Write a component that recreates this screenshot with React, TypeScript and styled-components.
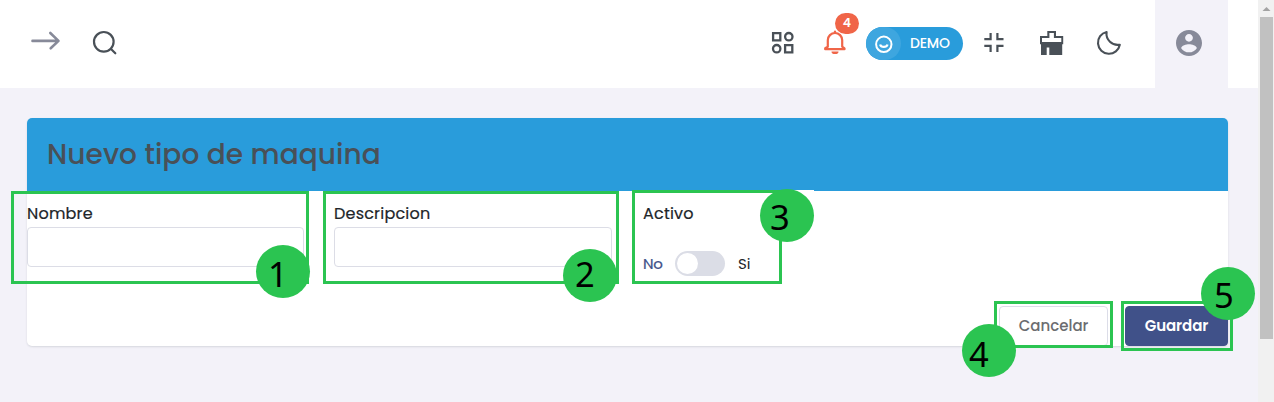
import React from "react";
import styled, { createGlobalStyle } from "styled-components";

const GlobalStyle = createGlobalStyle`
  * { box-sizing: border-box; }
  body { margin: 0; overflow: hidden; background: #f3f2f9; font-family: Poppins, Inter, "Liberation Sans", sans-serif; }
`;

const Screen = styled.div`
  position: relative;
  display: flex;
  width: 1274px;
  height: 402px;
  overflow: hidden;
`;

const Page = styled.div`
  flex: 1;
  display: flex;
  flex-direction: column;
  background: #f3f2f9;
`;

const Header = styled.header`
  height: 88px;
  display: flex;
  align-items: flex-start;
  padding-right: 30px;
  background: #fff;
`;

const Icon = styled.svg<{ $left: number; $top: number; $color?: string }>`
  flex: none;
  display: block;
  overflow: visible;
  margin-left: ${(p) => p.$left}px;
  margin-top: ${(p) => p.$top}px;
  color: ${(p) => p.$color ?? "#495057"};
`;

const Tools = styled.div`
  display: flex;
  align-items: flex-start;
  margin-left: auto;
`;

const Bell = styled.div`
  position: relative;
  width: 24px;
  margin-left: 29px;
`;

const Badge = styled.span`
  position: absolute;
  left: 12px;
  top: 13px;
  width: 24px;
  height: 21px;
  border-radius: 11px;
  background: #f06548;
  color: #fff;
  font-size: 12.5px;
  font-weight: 600;
  line-height: 20px;
  text-align: center;
`;

const DemoPill = styled.div`
  display: flex;
  align-items: center;
  width: 97px;
  height: 33px;
  margin: 27px 0 0 19px;
  border-radius: 17px;
  overflow: hidden;
  background: #299cdb;
  color: #fff;
  font-size: 14px;
  font-weight: 500;
  line-height: 33px;
  letter-spacing: -0.2px;
`;

const Face = styled.span`
  display: flex;
  align-items: center;
  justify-content: center;
  width: 35px;
  height: 33px;
  margin-right: 9px;
  border-radius: 0 17px 17px 0;
  background: #3ea6df;
`;

const UserBox = styled.div`
  width: 73px;
  height: 88px;
  margin-left: 33px;
  background: #f3f2f9;
`;

const Card = styled.main`
  display: flex;
  flex-direction: column;
  width: 1201px;
  height: 228px;
  margin: 30px 0 0 27px;
  border-radius: 5px;
  background: #fff;
  box-shadow: 0 1px 2px rgba(56, 65, 74, 0.15);
`;

const CardTitle = styled.h1`
  height: 73px;
  margin: 0;
  padding-left: 20px;
  border-radius: 5px 5px 0 0;
  background: #299cdb;
  color: #495057;
  font-size: 28px;
  font-weight: 500;
  line-height: 73px;
  letter-spacing: 0.08px;
`;

const Fields = styled.div`
  display: flex;
  gap: 30px;
  padding-top: 12px;
`;

const Field = styled.div<{ $width: number; $indent?: number }>`
  width: ${(p) => p.$width}px;
  padding-left: ${(p) => p.$indent ?? 0}px;
`;

const Label = styled.label`
  display: block;
  height: 24px;
  color: #212529;
  font-size: 16px;
  font-weight: 400;
  line-height: 21px;
  letter-spacing: 0.2px;
  -webkit-text-stroke: 0.2px #212529;
`;

const Input = styled.input`
  display: block;
  width: 100%;
  height: 40px;
  border: 1px solid #dcdde6;
  border-radius: 4px;
  background: #fff;
  outline: none;
`;

const SwitchRow = styled.div`
  display: flex;
  align-items: center;
  height: 25px;
  margin-top: 24px;
  color: #212529;
  font-size: 15px;
`;

const OffText = styled.span`
  width: 32px;
  color: #405189;
  letter-spacing: -0.3px;
  -webkit-text-stroke: 0.2px #405189;
`;

const Track = styled.span`
  width: 50px;
  height: 25px;
  margin-right: 13px;
  padding: 2px;
  border-radius: 13px;
  background: #dbdde6;
`;

const Knob = styled.span`
  display: block;
  width: 21px;
  height: 21px;
  border-radius: 50%;
  background: #fff;
`;

const Actions = styled.div`
  display: flex;
  justify-content: flex-end;
  gap: 17px;
  margin-top: auto;
`;

const Button = styled.button<{ $primary?: boolean }>`
  width: ${(p) => (p.$primary ? 103 : 109)}px;
  height: 40px;
  padding: 0 0 2px;
  border: 1px solid ${(p) => (p.$primary ? "#405189" : "#dcdde8")};
  border-radius: 4px;
  background: ${(p) => (p.$primary ? "#405189" : "#fff")};
  color: ${(p) => (p.$primary ? "#fff" : "#6b6c70")};
  font-family: inherit;
  font-size: 15px;
  font-weight: ${(p) => (p.$primary ? 600 : 500)};
  letter-spacing: ${(p) => (p.$primary ? -0.1 : 0)}px;
`;

const Scrollbar = styled.div`
  width: 16px;
  padding: 0 1px 0 2px;
  background: #f1f1f1;
`;

const ScrollArrow = styled.svg`
  display: block;
  width: 13px;
  height: 17px;
`;

const Thumb = styled.div`
  height: 322px;
  background: #c1c1c1;
`;

const Outline = styled.div<{ $x: number; $y: number; $w: number; $h: number }>`
  position: absolute;
  left: ${(p) => p.$x}px;
  top: ${(p) => p.$y}px;
  width: ${(p) => p.$w}px;
  height: ${(p) => p.$h}px;
  border: 3px solid #2bc451;
`;

const Marker = styled.div<{ $x: number; $y: number; $pad: number; $drop: number }>`
  position: absolute;
  left: ${(p) => p.$x}px;
  top: ${(p) => p.$y}px;
  width: 54px;
  height: 53px;
  padding: ${(p) => p.$drop}px 0 0 ${(p) => p.$pad}px;
  border-radius: 50%;
  background: #2bc451;
  color: #000;
  font-family: "Noto Sans", "Open Sans", sans-serif;
  font-size: 34.5px;
  line-height: 40px;
`;

const MarkerEdge = styled.div`
  position: absolute;
  left: 780px;
  top: 190px;
  width: 34px;
  height: 2px;
  background: #fff;
`;

const steps = [
  { box: [11, 191, 298, 93], dot: [256, 245], pad: 12, drop: 9 },
  { box: [323, 191, 296, 93], dot: [563, 249], pad: 12, drop: 5 },
  { box: [632, 190, 150, 94], dot: [760, 189], pad: 10, drop: 8 },
  { box: [994, 301, 119, 47], dot: [962, 324], pad: 7, drop: 10 },
  { box: [1121, 301, 112, 50], dot: [1201, 267], pad: 13, drop: 8 },
];

export default function App() {
  return (
    <>
      <GlobalStyle />
      <Screen>
        <Page>
          <Header>
            <Icon $left={31} $top={31} $color="#878a99" width="30" height="20" fill="none" stroke="currentColor" strokeWidth="2.6" strokeLinecap="round" strokeLinejoin="round">
              <path d="M1.5 9.9H27M19.3 2l8.2 7.9-7.8 7.4" />
            </Icon>
            <Icon $left={32} $top={31} width="25" height="25" fill="none" stroke="currentColor" strokeWidth="2.2" strokeLinecap="round">
              <circle cx="10.8" cy="10.8" r="9.8" />
              <path d="M18 18l4.3 4.3" />
            </Icon>
            <Tools>
              <Icon $left={0} $top={32} width="22" height="22" fill="none" stroke="currentColor" strokeWidth="2.3">
                <path d="M1.1 1.100h7.200v7.200H1.100zM13.100 13.100h7.200v7.200h-7.200z" />
                <circle cx="16.800" cy="4.700" r="3.700" />
                <circle cx="4.700" cy="16.700" r="3.700" />
              </Icon>
              <Bell>
                <Icon $left={0} $top={30} $color="#f06548" width="24" height="25" fill="none" stroke="currentColor" strokeWidth="2.2" strokeLinejoin="round">
                  <path d="M4.800 16.700V10.200a7.200 7.200 0 0 1 14.400 0v6.500l2.300 1.600v.9H2.200v-.9z" />
                  <path d="M12 1.500v1.400" strokeLinecap="round" />
                  <path d="M8.500 21.400h7a3.500 2.600 0 0 1-7 0z" fill="currentColor" stroke="none" />
                </Icon>
                <Badge>4</Badge>
              </Bell>
              <DemoPill>
                <Face>
                  <svg width="18" height="18" fill="none" stroke="currentColor" strokeWidth="2">
                    <circle cx="8.800" cy="9.300" r="7.700" />
                    <path d="M5.100 9.500a3.800 3.200 0 0 0 7.400 0" strokeWidth="2.200" />
                  </svg>
                </Face>
                DEMO
              </DemoPill>
              <Icon $left={21} $top={33} width="20" height="20" fill="none" stroke="currentColor" strokeWidth="2.200">
                <path d="M6.600 0v6.100H.3M13.400 0v6.100h6.100M6.600 19v-6.100H.3M13.400 19v-6.100h6.100" />
              </Icon>
              <Icon $left={36} $top={31} width="24" height="24" fill="currentColor">
                <path fillRule="evenodd" d="M7.300 0h8.700v5h7.200v8.200h-1V24H9.300V16.500H6.700V24H1V13.200H0V5h7.300zM9.400 2v5H2v4h19.300V7h-7.400V2z" />
              </Icon>
              <Icon $left={33} $top={31} width="25" height="24" fill="none" stroke="currentColor" strokeWidth="2.100" strokeLinejoin="round">
                <path d="M9.600 1A11.300 11.300 0 0 0 22.800 13.700 11 11 0 1 1 9.600 1z" />
              </Icon>
              <UserBox>
                <Icon $left={21} $top={30} $color="#878a99" width="26" height="26" viewBox="2 2 20 20" fill="currentColor">
                  <path d="M12 2C6.480 2 2 6.480 2 12s4.480 10 10 10 10-4.480 10-10S17.520 2 12 2zm0 3c1.660 0 3 1.340 3 3s-1.340 3-3 3-3-1.340-3-3 1.340-3 3-3zm0 14.200c-2.500 0-4.710-1.280-6-3.220.030-1.990 4-3.080 6-3.080 1.990 0 5.970 1.090 6 3.080-1.290 1.940-3.500 3.220-6 3.220z" />
                </Icon>
              </UserBox>
            </Tools>
          </Header>
          <Card>
            <CardTitle>Nuevo tipo de maquina</CardTitle>
            <Fields>
              <Field $width={277}>
                <Label>Nombre</Label>
                <Input aria-label="Nombre" />
              </Field>
              <Field $width={278}>
                <Label>Descripcion</Label>
                <Input aria-label="Descripcion" />
              </Field>
              <Field $width={140} $indent={1}>
                <Label>Activo</Label>
                <SwitchRow>
                  <OffText>No</OffText>
                  <Track><Knob /></Track>
                  <span>Si</span>
                </SwitchRow>
              </Field>
            </Fields>
            <Actions>
              <Button>Cancelar</Button>
              <Button $primary>Guardar</Button>
            </Actions>
          </Card>
        </Page>
        <Scrollbar>
          <ScrollArrow viewBox="0 0 13 17"><path d="M2.500 11L6.500 7l4 4z" fill="#a3a3a3" /></ScrollArrow>
          <Thumb />
        </Scrollbar>
        {steps.map((s, i) => (
          <React.Fragment key={i}>
            <Outline $x={s.box[0]} $y={s.box[1]} $w={s.box[2]} $h={s.box[3]} />
            {i === 2 && <MarkerEdge />}
            <Marker $x={s.dot[0]} $y={s.dot[1]} $pad={s.pad} $drop={s.drop}>{i + 1}</Marker>
          </React.Fragment>
        ))}
      </Screen>
    </>
  );
}
